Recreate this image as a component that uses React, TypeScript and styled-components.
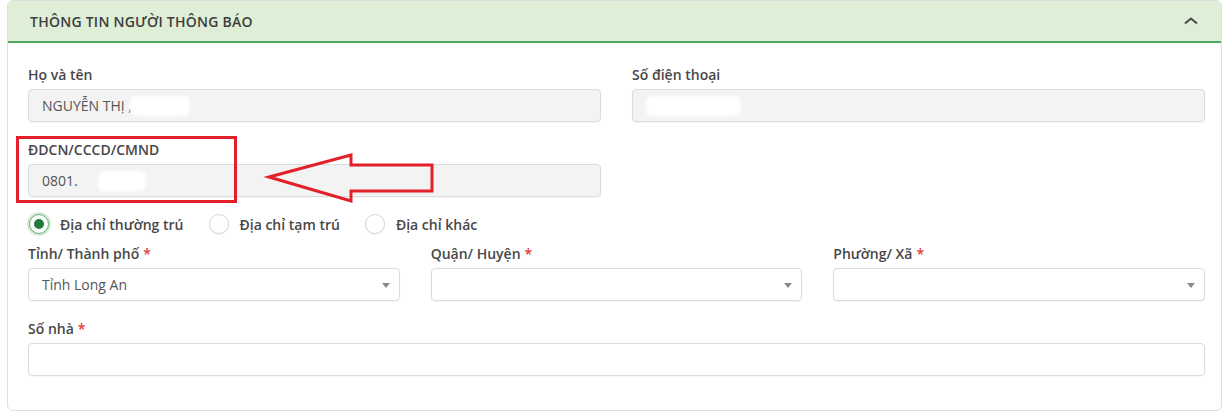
import React from "react";
import styled, { createGlobalStyle } from "styled-components";

const GlobalStyle = createGlobalStyle`
  body {
    margin: 0;
    background: #ffffff;
    font-family: "Open Sans", "Noto Sans", sans-serif;
    color: #3d3d3d;
  }
`;

const Page = styled.div`
  padding: 0 2px 0 7px;
`;

const Card = styled.section`
  border: 1px solid #dedede;
  border-radius: 6px;
  overflow: hidden;
  background: #ffffff;
`;

const CardHeader = styled.header`
  height: 40px;
  display: flex;
  align-items: center;
  justify-content: space-between;
  padding: 0 22px 0 22px;
  background: #dfeed6;
  border-bottom: 2px solid #4fa55b;
`;

const CardTitle = styled.h3`
  margin: 0;
  font-size: 14px;
  font-weight: 600;
  color: #3d3d3d;
  letter-spacing: 0.25px;
`;

const CollapseIcon = styled.svg`
  display: block;
`;

const CardBody = styled.div`
  padding: 23px 16px 34px 20px;
`;

const Row = styled.div<{ $cols: number; $top?: number }>`
  display: grid;
  grid-template-columns: repeat(${(p) => p.$cols}, 1fr);
  column-gap: 31px;
  margin-top: ${(p) => p.$top ?? 0}px;
`;

const Field = styled.div`
  position: relative;
  display: flex;
  flex-direction: column;
`;

const Label = styled.label`
  height: 18px;
  line-height: 18px;
  margin-bottom: 5px;
  font-size: 14px;
  font-weight: 600;
  color: #474747;
`;

const Required = styled.span`
  color: #e53935;
  margin-left: 4px;
`;

const Box = styled.div<{ $readOnly?: boolean }>`
  position: relative;
  height: 33px;
  box-sizing: border-box;
  display: flex;
  align-items: center;
  padding: 0 13px;
  border: 1px solid #dcdcdc;
  border-radius: 4px;
  background: ${(p) => (p.$readOnly ? "#f3f3f3" : "#ffffff")};
  box-shadow: 0 1px 1px rgba(0, 0, 0, 0.04);
  font-size: 14px;
  color: #555555;
  white-space: nowrap;
`;

const Caret = styled.span`
  position: absolute;
  right: 9px;
  top: 50%;
  margin-top: -2px;
  width: 0;
  height: 0;
  border-left: 4px solid transparent;
  border-right: 4px solid transparent;
  border-top: 5px solid #8a8a8a;
`;

// white smudge covering personal data
const Redacted = styled.span<{ $w: number; $gap?: number }>`
  display: inline-block;
  width: ${(p) => p.$w}px;
  height: 20px;
  margin-left: ${(p) => p.$gap ?? 0}px;
  background: #ffffff;
  border-radius: 6px;
  filter: blur(1.5px);
`;

const Highlight = styled.div`
  position: absolute;
  left: -12px;
  top: -5px;
  width: 221px;
  height: 67px;
  box-sizing: border-box;
  border: 3px solid #e3202a;
  pointer-events: none;
`;

const Pointer = styled.svg`
  position: absolute;
  left: 239px;
  top: 12px;
  overflow: visible;
  pointer-events: none;
`;

const RadioGroup = styled.div`
  display: flex;
  align-items: center;
  gap: 25px;
  height: 20px;
  margin-top: 17px;
  padding-left: 1px;
`;

const RadioItem = styled.label`
  display: flex;
  align-items: center;
  gap: 11px;
  font-size: 14px;
  font-weight: 600;
  color: #474747;
`;

const RadioDot = styled.span<{ $checked?: boolean }>`
  width: 20px;
  height: 20px;
  box-sizing: border-box;
  border-radius: 50%;
  display: flex;
  align-items: center;
  justify-content: center;
  background: #ffffff;
  border: 1px solid ${(p) => (p.$checked ? "#5fb06a" : "#d4d4d4")};
  box-shadow: ${(p) =>
    p.$checked ? "0 0 0 2px rgba(95, 176, 106, 0.25)" : "0 1px 1px rgba(0,0,0,0.05)"};

  &::after {
    content: "";
    display: ${(p) => (p.$checked ? "block" : "none")};
    width: 10px;
    height: 10px;
    border-radius: 50%;
    background: #1e7b38;
  }
`;

type FieldProps = {
  label: string;
  required?: boolean;
  readOnly?: boolean;
  select?: boolean;
  children?: React.ReactNode;
  extra?: React.ReactNode;
};

const FormField = ({ label, required, readOnly, select, children, extra }: FieldProps) => (
  <Field>
    <Label>
      {label}
      {required && <Required>*</Required>}
    </Label>
    <Box $readOnly={readOnly}>
      {children}
      {select && <Caret />}
    </Box>
    {extra}
  </Field>
);

const addressTypes = [
  { label: "Địa chỉ thường trú", checked: true },
  { label: "Địa chỉ tạm trú" },
  { label: "Địa chỉ khác" },
];

export default function App() {
  return (
    <>
      <GlobalStyle />
      <Page>
        <Card>
          <CardHeader>
            <CardTitle>THÔNG TIN NGƯỜI THÔNG BÁO</CardTitle>
            <CollapseIcon width="16" height="10" viewBox="0 0 16 10">
              <polyline
                points="2,7.5 8,2.5 14,7.5"
                fill="none"
                stroke="#4a4a4a"
                strokeWidth="2.1"
              />
            </CollapseIcon>
          </CardHeader>

          <CardBody>
            <Row $cols={2}>
              <FormField label="Họ và tên" readOnly>
                NGUYỄN THỊ ,<Redacted $w={60} $gap={-2} />
              </FormField>
              <FormField label="Số điện thoại" readOnly>
                <Redacted $w={95} />
              </FormField>
            </Row>

            <Row $cols={2} $top={19}>
              <FormField
                label="ĐDCN/CCCD/CMND"
                readOnly
                extra={
                  <>
                    <Highlight />
                    <Pointer width="168" height="50" viewBox="0 0 168 50">
                      <polygon
                        points="2,24 84,2 84,12 165,12 165,38 84,38 84,48"
                        fill="none"
                        stroke="#e3202a"
                        strokeWidth="3"
                      />
                    </Pointer>
                  </>
                }
              >
                0801.<Redacted $w={48} $gap={20} />
              </FormField>
            </Row>

            <RadioGroup>
              {addressTypes.map((t) => (
                <RadioItem key={t.label}>
                  <RadioDot $checked={t.checked} />
                  {t.label}
                </RadioItem>
              ))}
            </RadioGroup>

            <Row $cols={3} $top={11}>
              <FormField label="Tỉnh/ Thành phố" required select>
                Tỉnh Long An
              </FormField>
              <FormField label="Quận/ Huyện" required select />
              <FormField label="Phường/ Xã" required select />
            </Row>

            <Row $cols={1} $top={19}>
              <FormField label="Số nhà" required />
            </Row>
          </CardBody>
        </Card>
      </Page>
    </>
  );
}
